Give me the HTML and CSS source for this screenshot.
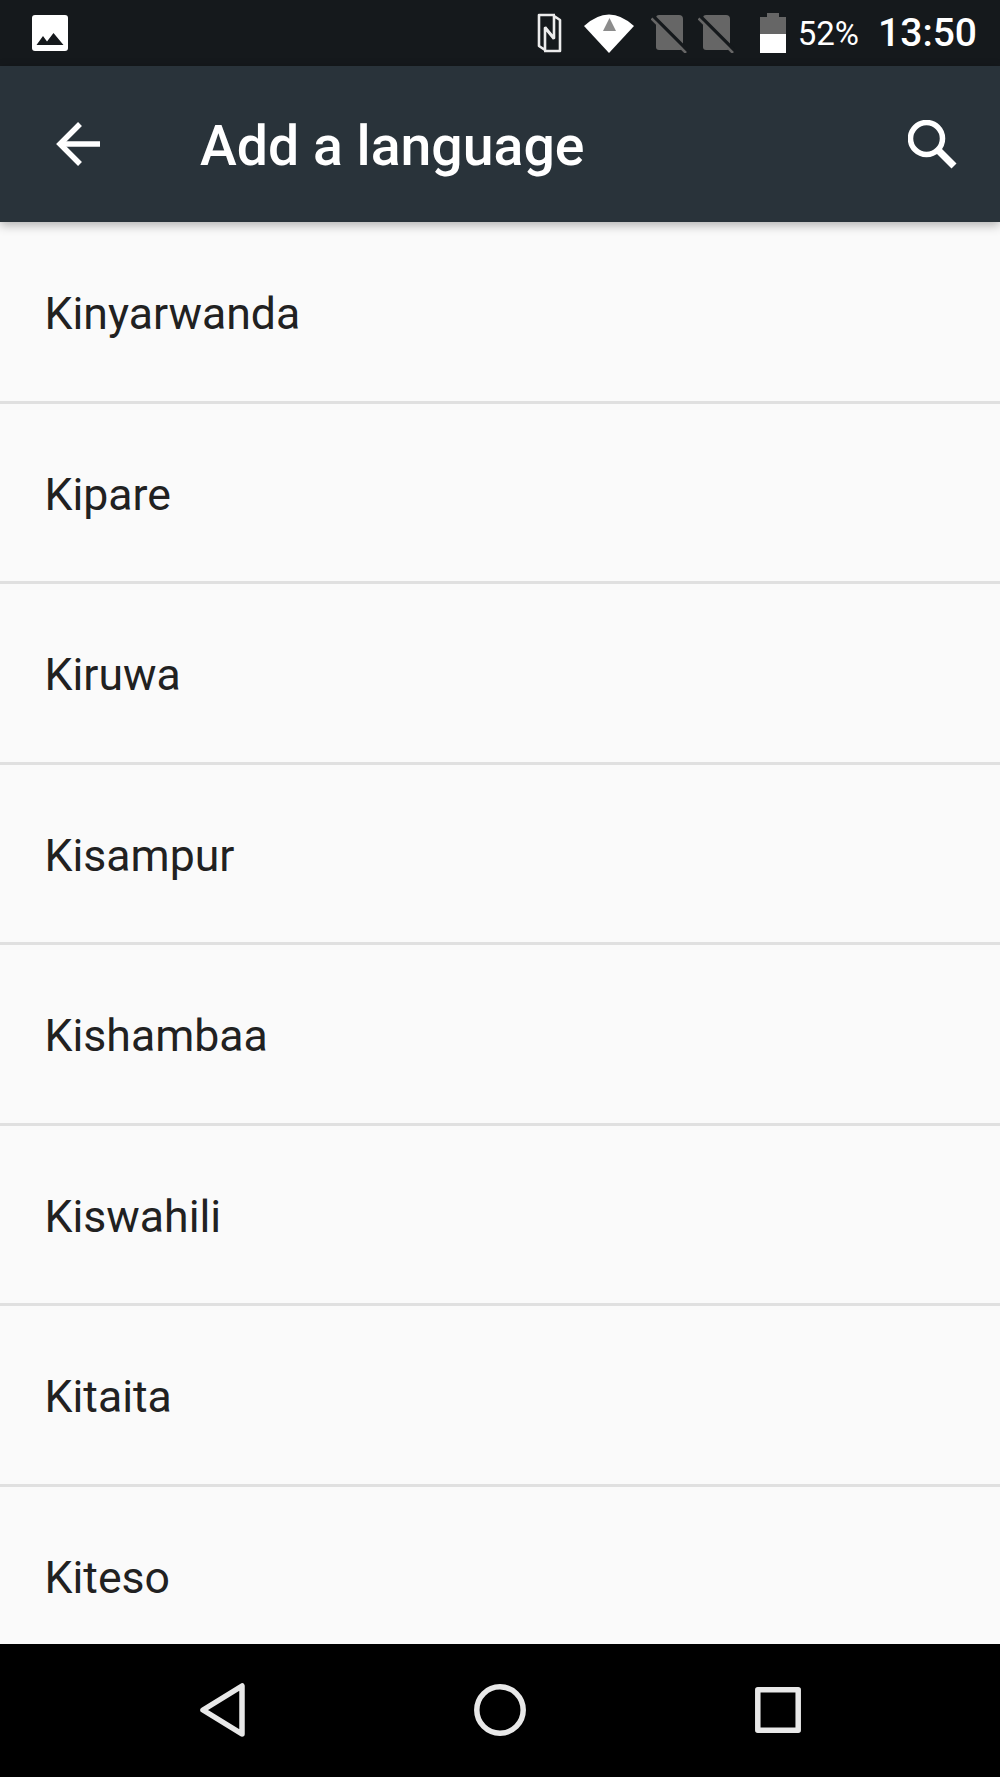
FILE: index.html
```html
<!DOCTYPE html>
<html lang="en">

<head>
    <meta charset="UTF-8">
    <title>Add a language</title>
    <link rel="stylesheet" href="styles.css">
</head>

<body>
    <div class="screen">
        <div class="status-bar">
            <svg class="pic-icon" width="36" height="36" viewBox="0 0 36 36">
                <rect width="36" height="36" rx="3" fill="#fff" />
                <path d="M4.5 30 L11 21 L15 26.5 L21.5 18 L31.5 30 Z" fill="#15191c" />
            </svg>
            <div class="status-right">
                <svg class="nfc-icon" width="25" height="40" viewBox="0 0 25 40" fill="none" stroke="#ececec" stroke-width="2.6" stroke-linejoin="round">
                    <path d="M18 2 H2 V33 L8 37 V15 L17 26" />
                    <path d="M7 38 H23 V7 L17 3 V25 L8 14" />
                </svg>
                <svg class="wifi-icon" width="50" height="40" viewBox="0 0 50 40">
                    <path d="M0 13 Q25 -10 50 13 L25 40 Z" fill="#fff" />
                    <path d="M25.5 5 L32 18 H19 Z" fill="#8c8c8c" />
                </svg>
                <svg class="sim-icon" width="37" height="38" viewBox="0 0 37 38">
                    <path d="M5 3 a3 3 0 0 1 3 -3 H28 a4 4 0 0 1 4 4 V32 a3 3 0 0 1 -3 3 H8 a3 3 0 0 1 -3 -3 Z" fill="#666" />
                    <path d="M2.5 1.5 L37 36" stroke="#15191c" stroke-width="3.5" />
                    <path d="M0.5 3.5 L35 38" stroke="#666" stroke-width="2.5" />
                </svg>
                <svg class="sim-icon sim-second" width="37" height="38" viewBox="0 0 37 38">
                    <path d="M5 3 a3 3 0 0 1 3 -3 H28 a4 4 0 0 1 4 4 V32 a3 3 0 0 1 -3 3 H8 a3 3 0 0 1 -3 -3 Z" fill="#666" />
                    <path d="M2.5 1.5 L37 36" stroke="#15191c" stroke-width="3.5" />
                    <path d="M0.5 3.5 L35 38" stroke="#666" stroke-width="2.5" />
                </svg>
                <svg class="battery-icon" width="26" height="40" viewBox="0 0 26 40">
                    <path d="M7 0 H19 V4 H26 V21 H0 V4 H7 Z" fill="#666" />
                    <rect y="21" width="26" height="19" fill="#fff" />
                </svg>
                <span class="battery-text">52%</span>
                <span class="clock">13:50</span>
            </div>
        </div>

        <div class="toolbar">
            <svg class="back-icon" width="44" height="44" viewBox="0 0 44 44" fill="none" stroke="#fff" stroke-width="5.5">
                <path d="M44 22 H4" />
                <path d="M24 2 L4 22 L24 42" />
            </svg>
            <h1 class="title">Add a language</h1>
            <svg class="search-icon" width="49" height="49" viewBox="0 0 49 49" fill="none" stroke="#fff" stroke-width="5.5">
                <circle cx="18.5" cy="18.5" r="16" />
                <path d="M30 30 L46 46" stroke-width="7" />
            </svg>
        </div>

        <ul class="lang-list">
            <li>Kinyarwanda</li>
            <li>Kipare</li>
            <li>Kiruwa</li>
            <li>Kisampur</li>
            <li>Kishambaa</li>
            <li>Kiswahili</li>
            <li>Kitaita</li>
            <li>Kiteso</li>
        </ul>

        <div class="nav-bar">
            <svg width="45" height="54" viewBox="0 0 45 54" fill="none" stroke="#e8e8e8" stroke-width="5.5" stroke-linejoin="round">
                <path d="M42 3 V51 L3 27 Z" />
            </svg>
            <svg width="52" height="52" viewBox="0 0 52 52" fill="none" stroke="#e8e8e8" stroke-width="5.5">
                <circle cx="26" cy="26" r="23.2" />
            </svg>
            <svg width="46" height="46" viewBox="0 0 46 46" fill="none" stroke="#e8e8e8" stroke-width="5.5" stroke-linejoin="round">
                <rect x="2.8" y="2.8" width="40.4" height="40.4" />
            </svg>
        </div>
    </div>
</body>

</html>
```

FILE: styles.css
```css
* {
    box-sizing: border-box;
}

body {
    margin: 0;
    font-family: Roboto, "Liberation Sans", sans-serif;
}

.screen {
    width: 1000px;
    height: 1777px;
    display: flex;
    flex-direction: column;
    overflow: hidden;
    background: #fafafa;
}

.status-bar {
    height: 66px;
    flex: none;
    display: flex;
    align-items: center;
    justify-content: space-between;
    padding: 0 23px 0 32px;
    background: #15191c;
    color: #fff;
}

.status-right {
    display: flex;
    align-items: center;
}

.nfc-icon {
    margin-right: 22px;
}

.wifi-icon {
    margin-right: 17px;
}

.sim-icon {
    margin-top: 2px;
}

.sim-second {
    margin-left: 10px;
}

.battery-icon {
    margin-left: 25px;
    margin-right: 12px;
}

.battery-text {
    font-size: 33px;
    margin-right: 19px;
}

.clock {
    font-size: 39px;
    font-weight: 500;
}

.toolbar {
    height: 156px;
    flex: none;
    display: flex;
    align-items: center;
    padding: 0 43px 0 56px;
    background: #29333a;
    color: #fff;
    position: relative;
    box-shadow: 0 3px 10px rgba(0, 0, 0, 0.3);
}

.title {
    margin: 4px 0 0 100px;
    flex: 1;
    font-size: 55.4px;
    font-weight: 500;
}

.lang-list {
    flex: 1;
    margin: 0;
    padding: 1.2px 0 0;
    list-style: none;
    overflow: hidden;
}

.lang-list li {
    height: 180.5px;
    display: flex;
    align-items: center;
    padding: 4.5px 0 0 44.5px;
    border-bottom: 3px solid #e0e0e0;
    font-size: 44.6px;
    color: #212121;
}

.nav-bar {
    height: 133.5px;
    flex: none;
    display: flex;
    align-items: center;
    justify-content: space-between;
    padding: 0 199px 0 200px;
    background: #000;
}
```
